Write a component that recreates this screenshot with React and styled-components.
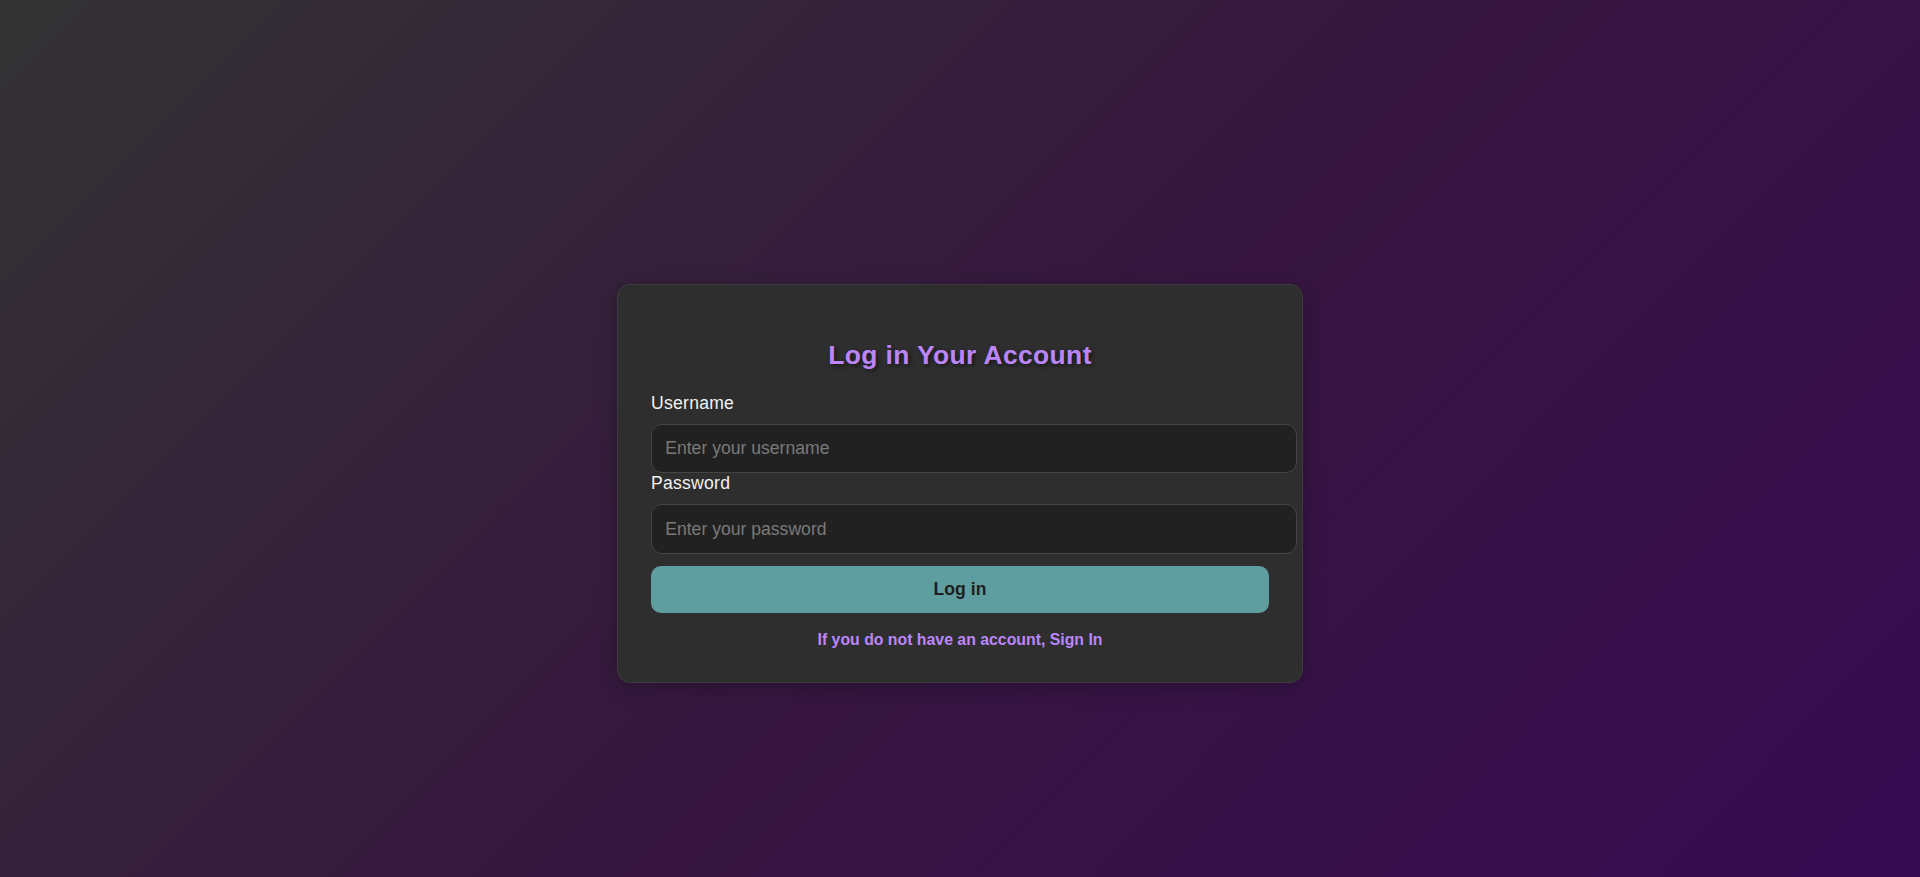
import React from "react";
import styled, { createGlobalStyle } from "styled-components";

const GlobalStyle = createGlobalStyle`
  html, body {
    margin: 0;
    padding: 0;
  }
  body {
    font-family: "Liberation Sans", Arial, sans-serif;
    background: linear-gradient(135deg, #333333 0%, #36173f 50%, #380b52 100%);
    min-height: 100vh;
  }
`;

const Page = styled.div`
  min-height: 100vh;
  box-sizing: border-box;
  padding-top: 90px;
  display: flex;
  justify-content: center;
  align-items: center;
`;

const Card = styled.div`
  width: 618px;
  padding: 33px;
  background-color: #2e2e2e;
  border: 1px solid #3c3c3c;
  border-radius: 13px;
  box-shadow: 0 4px 20px rgba(0, 0, 0, 0.25);
`;

const Title = styled.h2`
  margin: 22px 0 22px;
  font-size: 26.4px;
  font-weight: bold;
  letter-spacing: 0.4px;
  text-align: center;
  color: #bb86fc;
  text-shadow: 2px 2px 4px rgba(0, 0, 0, 0.5);
`;

const Field = styled.div`
  display: block;
`;

const Label = styled.label`
  display: block;
  margin-bottom: 10px;
  font-size: 17.6px;
  letter-spacing: 0.25px;
  color: #f2f2f2;
`;

const Input = styled.input`
  display: block;
  width: 100%;
  padding: 13.2px;
  font-family: "Liberation Sans", Arial, sans-serif;
  font-size: 17.6px;
  color: #e0e0e0;
  background-color: #212121;
  border: 1px solid #444444;
  border-radius: 11px;
  outline: none;

  &::placeholder {
    color: #7a7a7a;
  }
`;

const Button = styled.button`
  display: block;
  width: 100%;
  margin-top: 12px;
  padding: 13.2px;
  font-family: "Liberation Sans", Arial, sans-serif;
  font-size: 17.6px;
  font-weight: bold;
  color: #1e1e1e;
  background-color: #5f9ea0;
  border: none;
  border-radius: 10px;
  cursor: pointer;
`;

const Footer = styled.p`
  margin: 18px 0 0;
  text-align: center;
  font-size: 15.84px;
  font-weight: bold;
  color: #bb86fc;
`;

const App = () => {
  return (
    <>
      <GlobalStyle />
      <Page>
        <Card>
          <Title>Log in Your Account</Title>
          <Field>
            <Label htmlFor="username">Username</Label>
            <Input id="username" type="text" placeholder="Enter your username" />
          </Field>
          <Field>
            <Label htmlFor="password">Password</Label>
            <Input id="password" type="password" placeholder="Enter your password" />
          </Field>
          <Button>Log in</Button>
          <Footer>If you do not have an account, Sign In</Footer>
        </Card>
      </Page>
    </>
  );
};

export default App;
